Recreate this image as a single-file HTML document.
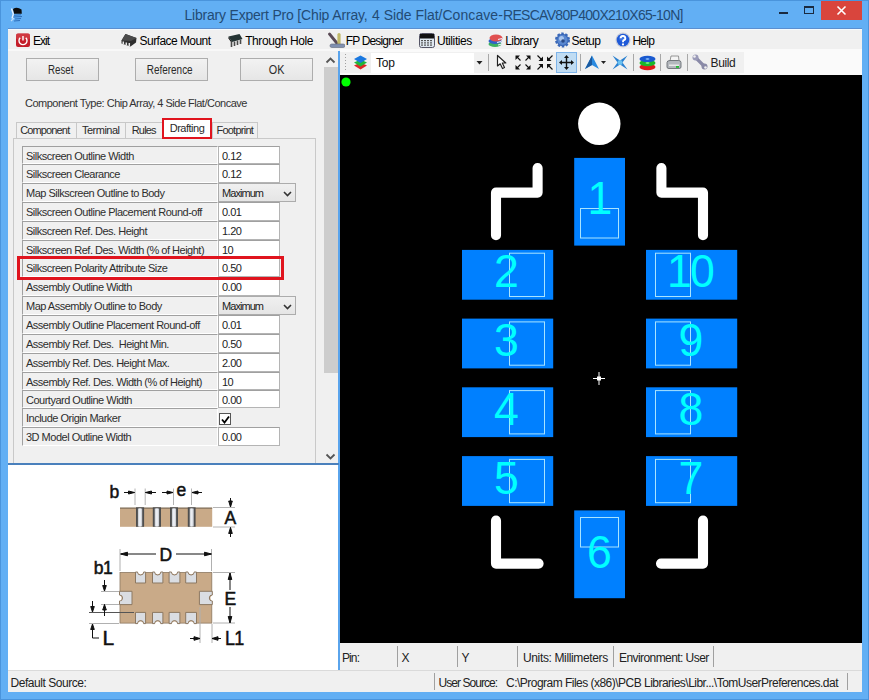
<!DOCTYPE html>
<html><head><meta charset="utf-8">
<style>
*{margin:0;padding:0;box-sizing:border-box}
html,body{width:869px;height:700px;overflow:hidden;background:#62aff4;font-family:"Liberation Sans",sans-serif;color:#000}
.a{position:absolute}
.t{position:absolute;white-space:nowrap;line-height:1}
.ttl{top:7.7px;font-size:14px;color:#234b74}
.menu{font-size:12px;letter-spacing:-0.45px;color:#000;top:35px}
.btn{position:absolute;top:58px;height:23px;width:73px;border:1px solid #adadad;background:linear-gradient(#f2f2f2,#e6e6e6);color:#2a2a2a;font-size:12px;letter-spacing:0px;text-align:center;line-height:22px}
.tab{position:absolute;top:122px;height:16px;border:1px solid #c8c8c8;border-bottom:none;background:#f0f0f0;color:#2a2a2a;font-size:11px;letter-spacing:-0.5px;text-align:center;line-height:15px}
.lbl{position:absolute;left:22px;width:196px;border-top:1px solid #a0a0a0;border-left:1px solid #a0a0a0;border-bottom:1px solid #fff;border-right:1px solid #fff;background:#f0f0f0;font-size:11px;letter-spacing:-0.5px;padding-left:3px;line-height:12px;color:#2e2e2e}
.val{position:absolute;left:218px;width:62px;border:1px solid #b4b4b4;border-top-color:#a0a0a0;background:#fff;font-size:11px;letter-spacing:-0.5px;padding-left:3px;line-height:12px;color:#222}
.dd{position:absolute;left:218px;width:78px;border:1px solid #acacac;background:linear-gradient(#f0f0f0,#e5e5e5);font-size:11px;letter-spacing:-0.95px;padding-left:3px;line-height:12px;color:#222}
.sb{position:absolute;top:646px;width:1px;height:21px;background:#a0a0a0}
.st{font-size:12px;letter-spacing:-0.4px;color:#222}
</style></head><body>
<!-- window frame -->
<div class="a" style="left:0;top:0;width:869px;height:1px;background:#4a94dc"></div>
<div class="a" style="left:0;top:0;width:1px;height:700px;background:#4a94dc"></div>
<div class="a" style="left:868px;top:0;width:1px;height:700px;background:#4a94dc"></div>
<div class="a" style="left:0;top:699px;width:869px;height:1px;background:#4a94dc"></div>
<!-- title icon -->
<svg class="a" style="left:9px;top:5px" width="16" height="18" viewBox="0 0 16 18">
<path d="M4,4 Q8,1.5 12.5,4.5 L12.8,8.8 L5,8.8 Z" fill="#0c0c0c"/>
<path d="M2.5,3.5 L4.3,9 L3,13.5" stroke="#e6f2ff" stroke-width="1.4" fill="none"/>
<path d="M2,16 L5,13" stroke="#cfe6ff" stroke-width="1.3" fill="none" opacity="0.8"/>
<path d="M5,10.3 L12,9.8 M4.5,12 L13,11.5 M6,14 L12,13.5 M5,16 L11,15.5" stroke="#1e5aa8" stroke-width="1.1" fill="none" opacity="0.75"/></svg>
<div class="t ttl" style="left:184.5px;letter-spacing:-0.206px">Library Expert Pro</div>
<div class="t ttl" style="left:297.3px;letter-spacing:-0.151px">[Chip Array,</div>
<div class="t ttl" style="left:372.1px;letter-spacing:-0.043px">4 Side Flat/</div>
<div class="t ttl" style="left:442.4px;letter-spacing:0.085px">Concave-</div>
<div class="t ttl" style="left:503.0px;letter-spacing:-0.702px">RESCAV80P400X210X65-10N]</div>
<!-- caption buttons -->
<div class="a" style="left:779px;top:12px;width:9px;height:2px;background:#1a2a40"></div>
<div class="a" style="left:804px;top:6px;width:10px;height:8px;border:1px solid #1a2a40;border-top-width:2px"></div>
<div class="a" style="left:821px;top:1px;width:41px;height:19px;background:#d9453d"></div>
<svg class="a" style="left:836px;top:5px" width="11" height="11" viewBox="0 0 11 11"><path d="M1.5,1.5 L9.5,9.5 M9.5,1.5 L1.5,9.5" stroke="#fff" stroke-width="1.6"/></svg>

<!-- client area -->
<div class="a" style="left:8px;top:29px;width:854px;height:663px;background:#f0f0f0"></div>
<!-- menu bar -->
<div class="a" style="left:8px;top:28px;width:854px;height:1px;background:#5b8fd0"></div>
<div class="a" style="left:8px;top:29px;width:854px;height:1px;background:#f4fbff"></div>

<!-- menu items -->
<div class="t menu" style="left:33px;letter-spacing:-1px">Exit</div>
<div class="t menu" style="left:139.6px;letter-spacing:-0.55px">Surface Mount</div>
<div class="t menu" style="left:245.2px;letter-spacing:-0.41px">Through Hole</div>
<div class="t menu" style="left:345.8px;letter-spacing:-0.85px">FP Designer</div>
<div class="t menu" style="left:436.9px;letter-spacing:-0.4px">Utilities</div>
<div class="t menu" style="left:505.2px;letter-spacing:-0.53px">Library</div>
<div class="t menu" style="left:571.6px;letter-spacing:-0.5px">Setup</div>
<div class="t menu" style="left:632.4px;letter-spacing:-0.74px">Help</div>
<svg class="a" style="left:15px;top:33px" width="16" height="15" viewBox="0 0 16 15">
<rect x="1" y="0.5" width="14" height="13.5" rx="2" fill="#c41e2a"/><rect x="1" y="0.5" width="14" height="6" rx="2" fill="#d84a50" opacity="0.6"/>
<path d="M5.2,4.8 A4,4 0 1 0 10.8,4.8" stroke="#fff" stroke-width="1.4" fill="none"/><path d="M8,3 V7.5" stroke="#fff" stroke-width="1.4"/></svg>
<svg class="a" style="left:121px;top:33px" width="17" height="15" viewBox="0 0 17 15">
<polygon points="0.5,7.5 4.5,1 15.5,5 15,9.5 9.5,13.5 0.5,10.5" fill="#2e2e2e"/><polygon points="4.5,1 15.5,5 10,8 0.5,7.5" fill="#4a4a4a"/>
<path d="M2.3,8.5 V11 M5.3,9.5 V12 M8.3,10 V13" stroke="#e8e8e8" stroke-width="1.5"/></svg>
<svg class="a" style="left:227px;top:33px" width="17" height="15" viewBox="0 0 17 15">
<polygon points="1.5,3.5 12.5,1 15.5,6 5,9" fill="#243434"/><polygon points="1.5,3.5 5,9 5,10.5 1.5,5.5" fill="#111"/>
<path d="M4.5,9 V14 M7.5,8.5 V13 M10.5,7.5 V12 M13.5,6.5 V11" stroke="#4a4a4a" stroke-width="1.6"/></svg>
<svg class="a" style="left:328px;top:32px" width="17" height="16" viewBox="0 0 17 16">
<path d="M1.5,2 L10,12.5" stroke="#5a4a55" stroke-width="2.8" stroke-linecap="round"/><path d="M11,2.5 V12" stroke="#c0b868" stroke-width="3.2" stroke-linecap="round"/>
<rect x="2" y="12" width="15" height="3.5" rx="1.7" fill="#8090b0" stroke="#606878" stroke-width="0.6"/></svg>
<svg class="a" style="left:419px;top:33px" width="16" height="15" viewBox="0 0 16 15">
<rect x="0.5" y="0.5" width="15" height="14" rx="2" fill="#dfe8f0" stroke="#556" stroke-width="1"/><rect x="1" y="1" width="14" height="4.5" fill="#111"/>
<g fill="#555"><rect x="2" y="7" width="2" height="1.2"/><rect x="5" y="7" width="2" height="1.2"/><rect x="8" y="7" width="2" height="1.2"/><rect x="11" y="7" width="2" height="1.2"/>
<rect x="2" y="9.3" width="2" height="1.2"/><rect x="5" y="9.3" width="2" height="1.2"/><rect x="8" y="9.3" width="2" height="1.2"/><rect x="11" y="9.3" width="2" height="1.2"/>
<rect x="2" y="11.5" width="2" height="1.2"/><rect x="5" y="11.5" width="2" height="1.2"/><rect x="8" y="11.5" width="2" height="1.2"/><rect x="11" y="11.5" width="2" height="1.2"/></g></svg>
<svg class="a" style="left:488px;top:33px" width="16" height="15" viewBox="0 0 16 15">
<ellipse cx="7" cy="11" rx="6.5" ry="3" fill="#3cb060"/><ellipse cx="7" cy="8" rx="6.5" ry="3" fill="#3060c8"/><ellipse cx="8" cy="5" rx="6.5" ry="3.5" fill="#e05050"/>
<path d="M10,6.5 L14,5.5 M9,9.5 L13,8.5 M10,12 L14,11" stroke="#eef" stroke-width="1.2"/></svg>
<svg class="a" style="left:554px;top:32px" width="17" height="16" viewBox="0 0 17 16">
<circle cx="8.5" cy="8" r="6.2" fill="#3a68b8" stroke="#3a68b8" stroke-width="2.6" stroke-dasharray="2.4 1.5"/><circle cx="8.5" cy="8" r="5" fill="#5a88d0"/><circle cx="7.5" cy="6.5" r="2.5" fill="#a8c4ec"/><circle cx="9" cy="9" r="1.8" fill="#2a4a88"/></svg>
<svg class="a" style="left:615px;top:32px" width="16" height="16" viewBox="0 0 16 16">
<circle cx="8" cy="8" r="7.5" fill="#c8ccd8"/><circle cx="8" cy="8" r="6.3" fill="#1f5ad8"/><circle cx="7" cy="6" r="3" fill="#4a80e8" opacity="0.6"/>
<path d="M5.7,6.2 A2.3,2.2 0 1 1 8.5,8.3 Q8,8.7 8,10.2" stroke="#fff" stroke-width="1.9" fill="none"/><circle cx="8" cy="12.4" r="1.1" fill="#fff"/></svg>
<!-- left panel -->
<div class="a" style="left:8px;top:49px;width:331px;height:2px;background:#f8f8f8"></div>

<!-- buttons -->
<div class="btn" style="left:26px"><span style="display:inline-block;transform:scaleX(0.81);position:relative;left:-1.5px">Reset</span></div>
<div class="btn" style="left:135px"><span style="display:inline-block;transform:scaleX(0.83);position:relative;left:-1.5px">Reference</span></div>
<div class="btn" style="left:240px"><span style="display:inline-block;transform:scaleX(0.9)">OK</span></div>
<div class="t" style="left:25px;top:98px;font-size:11px;letter-spacing:-0.5px;color:#333">Component Type: Chip Array, 4 Side Flat/Concave</div>
<div class="a" style="left:13px;top:138px;width:303px;height:326px;border:1px solid #c9c9c9;border-bottom:none;background:#f0f0f0"></div>
<div class="tab" style="left:15.5px;width:61.5px"><span style="letter-spacing:-0.85px;position:relative;left:-1.5px">Component</span></div>
<div class="tab" style="left:76px;width:49.5px">Terminal</div>
<div class="tab" style="left:124.5px;width:38.5px"><span style="letter-spacing:-0.8px">Rules</span></div>
<div class="tab" style="left:212px;width:45.5px"><span style="letter-spacing:-0.75px">Footprint</span></div>
<div class="tab" style="left:162px;top:118px;width:50px;height:21px;background:#fff;border:2px solid #e0141e;line-height:17px">Drafting</div>
<div class="lbl" style="top:146px;height:18px;padding-top:2.7px">Silkscreen Outline Width</div>
<div class="val" style="top:146px;height:18px;padding-top:2.7px">0.12</div>
<div class="lbl" style="top:164px;height:19px;padding-top:2.7px">Silkscreen Clearance</div>
<div class="val" style="top:164px;height:19px;padding-top:2.7px">0.12</div>
<div class="lbl" style="top:183px;height:19px;padding-top:3.2px">Map Silkscreen Outline to Body</div>
<div class="dd" style="top:183px;height:19px;padding-top:3.2px">Maximum<svg class="a" style="right:3px;top:7px" width="9" height="6" viewBox="0 0 9 6"><path d="M1,1 L4.5,4.5 L8,1" stroke="#333" stroke-width="1.6" fill="none"/></svg></div>
<div class="lbl" style="top:202px;height:19px;padding-top:2.7px">Silkscreen Outline Placement Round-off</div>
<div class="val" style="top:202px;height:19px;padding-top:2.7px">0.01</div>
<div class="lbl" style="top:221px;height:19px;padding-top:2.7px">Silkscreen Ref. Des. Height</div>
<div class="val" style="top:221px;height:19px;padding-top:2.7px">1.20</div>
<div class="lbl" style="top:240px;height:18px;padding-top:2.7px">Silkscreen Ref. Des. Width (% of Height)</div>
<div class="val" style="top:240px;height:18px;padding-top:2.7px">10</div>
<div class="lbl" style="top:258px;height:19px;padding-top:2.7px">Silkscreen Polarity Attribute Size</div>
<div class="val" style="top:258px;height:19px;padding-top:2.7px">0.50</div>
<div class="lbl" style="top:277px;height:19px;padding-top:2.7px">Assembly Outline Width</div>
<div class="val" style="top:277px;height:19px;padding-top:2.7px">0.00</div>
<div class="lbl" style="top:296px;height:19px;padding-top:3.2px">Map Assembly Outline to Body</div>
<div class="dd" style="top:296px;height:19px;padding-top:3.2px">Maximum<svg class="a" style="right:3px;top:7px" width="9" height="6" viewBox="0 0 9 6"><path d="M1,1 L4.5,4.5 L8,1" stroke="#333" stroke-width="1.6" fill="none"/></svg></div>
<div class="lbl" style="top:315px;height:19px;padding-top:2.7px">Assembly Outline Placement Round-off</div>
<div class="val" style="top:315px;height:19px;padding-top:2.7px">0.01</div>
<div class="lbl" style="top:334px;height:19px;padding-top:2.7px">Assembly Ref. Des.&nbsp; Height Min.</div>
<div class="val" style="top:334px;height:19px;padding-top:2.7px">0.50</div>
<div class="lbl" style="top:353px;height:19px;padding-top:2.7px">Assembly Ref. Des. Height Max.</div>
<div class="val" style="top:353px;height:19px;padding-top:2.7px">2.00</div>
<div class="lbl" style="top:372px;height:18px;padding-top:2.7px">Assembly Ref. Des. Width (% of Height)</div>
<div class="val" style="top:372px;height:18px;padding-top:2.7px">10</div>
<div class="lbl" style="top:390px;height:18px;padding-top:2.7px">Courtyard Outline Width</div>
<div class="val" style="top:390px;height:18px;padding-top:2.7px">0.00</div>
<div class="lbl" style="top:408px;height:19px;padding-top:2.7px">Include Origin Marker</div>
<div class="a" style="left:218.5px;top:412.5px;width:12px;height:12px;border:1px solid #555;background:#fff"><svg class="a" style="left:1px;top:1px" width="9" height="9" viewBox="0 0 9 9"><path d="M1,4.5 L3.5,7.5 L8,1.5" stroke="#000" stroke-width="1.8" fill="none"/></svg></div>
<div class="lbl" style="top:427px;height:19px;padding-top:2.7px">3D Model Outline Width</div>
<div class="val" style="top:427px;height:19px;padding-top:2.7px">0.00</div>
<div class="a" style="left:17px;top:256px;width:267px;height:24px;border:3px solid #e0141e"></div>
<div class="a" style="left:323px;top:51px;width:16px;height:412px;background:#f0f0f0"></div>
<svg class="a" style="left:325px;top:56px" width="11" height="8" viewBox="0 0 11 8"><path d="M1.5,6.5 L5.5,2.5 L9.5,6.5" stroke="#555" stroke-width="1.8" fill="none"/></svg>
<div class="a" style="left:324px;top:67px;width:14px;height:306px;background:#cdcdcd"></div>
<svg class="a" style="left:325px;top:453px" width="11" height="8" viewBox="0 0 11 8"><path d="M1.5,1.5 L5.5,5.5 L9.5,1.5" stroke="#555" stroke-width="1.8" fill="none"/></svg>
<!-- right toolbar area -->
<div class="a" style="left:340px;top:49px;width:522px;height:26px;background:#fafafa"></div>
<div class="a" style="left:340px;top:52px;width:404px;height:21px;background:#f0f0f0"></div>
<!-- toolbar -->
<div class="a" style="left:345px;top:54px;width:1px;height:16px;background:repeating-linear-gradient(#a0a0a0 0 1px,transparent 1px 3px)"></div>
<svg class="a" style="left:353px;top:54px" width="15" height="17" viewBox="0 0 15 17">
<polygon points="7.5,8.5 14,11.5 7.5,15.5 1,11.5" fill="#e02828"/><polygon points="7.5,5.5 14,8.5 7.5,12.5 1,8.5" fill="#22b83a"/><polygon points="7.5,1.5 14,5 7.5,9 1,5" fill="#1a78e0"/></svg>
<div class="a" style="left:371px;top:53px;width:116px;height:20px;background:#fff"></div>
<div class="a" style="left:474px;top:53px;width:13px;height:20px;background:#f0f0f0"></div>
<svg class="a" style="left:476px;top:60px" width="7" height="5" viewBox="0 0 7 5"><polygon points="0.5,1 6.5,1 3.5,4.5" fill="#222"/></svg>
<div class="t" style="left:376px;top:57px;font-size:12px;letter-spacing:-0.2px;color:#111">Top</div>
<div class="a" style="left:488px;top:54px;width:1px;height:17px;background:#a8a8a8"></div>
<div class="a" style="left:580px;top:54px;width:1px;height:17px;background:#a8a8a8"></div>
<div class="a" style="left:633px;top:54px;width:1px;height:17px;background:#a8a8a8"></div>
<div class="a" style="left:660px;top:54px;width:1px;height:17px;background:#a8a8a8"></div>
<div class="a" style="left:687px;top:54px;width:1px;height:17px;background:#a8a8a8"></div>
<svg class="a" style="left:496px;top:54px" width="12" height="16" viewBox="0 0 12 16">
<path d="M1.5,1.5 L1.5,12 L4.2,9.8 L6.5,14.5 L8.5,13.5 L6.3,9 L9.8,9 Z" fill="#fff" stroke="#222" stroke-width="1.2" stroke-linejoin="round"/></svg>
<svg class="a" style="left:515px;top:55px" width="16" height="15" viewBox="0 0 16 15">
<g fill="#111"><polygon points="0.5,0.5 5,0.5 0.5,5"/><polygon points="15.5,0.5 11,0.5 15.5,5"/><polygon points="0.5,14.5 5,14.5 0.5,10"/><polygon points="15.5,14.5 11,14.5 15.5,10"/></g>
<g stroke="#111" stroke-width="1.1"><path d="M2,2 L5.5,5.5 M14,2 L10.5,5.5 M2,13 L5.5,9.5 M14,13 L10.5,9.5"/></g></svg>
<svg class="a" style="left:537px;top:55px" width="16" height="15" viewBox="0 0 16 15">
<g fill="#111"><polygon points="6,6 1.5,6 6,1.5"/><polygon points="10,6 14.5,6 10,1.5"/><polygon points="6,9 1.5,9 6,13.5"/><polygon points="10,9 14.5,9 10,13.5"/></g>
<g stroke="#111" stroke-width="1.1"><path d="M0.5,0.5 L4.5,4.5 M15.5,0.5 L11.5,4.5 M0.5,14.5 L4.5,10.5 M15.5,14.5 L11.5,10.5"/></g></svg>
<div class="a" style="left:556px;top:52px;width:21px;height:21px;background:#c0dcf3;border:1px solid #7eb4ea"></div>
<svg class="a" style="left:559px;top:55px" width="15" height="15" viewBox="0 0 15 15">
<path d="M7.5,2 V13 M2,7.5 H13" stroke="#111" stroke-width="1.4"/>
<g fill="#111"><polygon points="7.5,0 10,3 5,3"/><polygon points="7.5,15 10,12 5,12"/><polygon points="0,7.5 3,5 3,10"/><polygon points="15,7.5 12,5 12,10"/></g></svg>
<svg class="a" style="left:584px;top:55px" width="24" height="15" viewBox="0 0 24 15">
<polygon points="8,0.5 15,14 8,10 1,14" fill="#2a8ae0"/><polygon points="8,0.5 8,10 1,14" fill="#1a5aa0"/>
<polygon points="17,6 22,6 19.5,9" fill="#222"/></svg>
<svg class="a" style="left:612px;top:55px" width="16" height="15" viewBox="0 0 16 15">
<polygon points="0.5,0.5 8,5.5 15.5,0.5 10.5,7.5 15.5,14.5 8,9.5 0.5,14.5 5.5,7.5" fill="#2a80d0"/><circle cx="8" cy="7.5" r="2.5" fill="#6ac0f0"/></svg>
<svg class="a" style="left:639px;top:55px" width="17" height="16" viewBox="0 0 17 16">
<ellipse cx="8.5" cy="12" rx="8" ry="3.2" fill="#e01a1a"/><ellipse cx="8.5" cy="8" rx="8" ry="3.2" fill="#1ab82a"/><ellipse cx="8.5" cy="4" rx="8" ry="3.2" fill="#1a5ad0"/>
<ellipse cx="8.5" cy="4" rx="2" ry="0.8" fill="#9cf"/><ellipse cx="8.5" cy="8" rx="2" ry="0.8" fill="#9f9"/></svg>
<svg class="a" style="left:666px;top:55px" width="16" height="15" viewBox="0 0 16 15">
<path d="M4,6 L5,1 H12.5 L13,6 Z" fill="#f4f4f4" stroke="#8a8a8a" stroke-width="0.9"/><path d="M1,7.5 Q1,5.5 4,5.5 H12.5 Q15,5.5 15,7.5 V12 Q15,13.5 13,13.5 H3 Q1,13.5 1,12 Z" fill="#b4b8be" stroke="#6a6e74" stroke-width="0.9"/>
<rect x="3" y="9.5" width="10" height="1.5" fill="#e8e8e8"/><rect x="10" y="11" width="3" height="1.8" fill="#22bb33"/></svg>
<svg class="a" style="left:692px;top:54px" width="16" height="16" viewBox="0 0 16 16">
<path d="M3,3 L13,13" stroke="#8a8aa8" stroke-width="3.2" stroke-linecap="round"/><circle cx="3.5" cy="3.5" r="3" fill="#9a9ab8"/><circle cx="12.5" cy="12.5" r="3" fill="#8a8aa8"/>
<circle cx="2.5" cy="2.5" r="1.3" fill="#f0f0f0"/><circle cx="13.5" cy="13.5" r="1.3" fill="#f0f0f0"/></svg>
<div class="t" style="left:710.5px;top:57px;font-size:12px;letter-spacing:-0.35px;color:#222">Build</div>
<!-- canvas -->
<div class="a" style="left:340px;top:75px;width:522px;height:568px;background:#000"></div>
<!-- canvas svg -->
<svg class="a" style="left:340px;top:75px" width="522" height="568" viewBox="340 75 522 568">
<circle cx="346" cy="82" r="4.6" fill="#00ff00"/>
<circle cx="599.3" cy="123.8" r="21.2" fill="#fff"/>
<g stroke="#fff" stroke-width="10.1" fill="none" stroke-linecap="round" stroke-linejoin="round">
<path d="M537.6,168 V192.6 H496 V235.2"/>
<path d="M661.4,168 V192.6 H703 V235.2"/>
<path d="M496,520.5 V563.6 H538.6"/>
<path d="M703,520.5 V563.6 H661"/>
</g>
<g fill="#0080ff">
<rect x="574.2" y="157.9" width="50.8" height="87.7"/>
<rect x="574.2" y="510.4" width="50.8" height="87.8"/>
<rect x="462" y="249.9" width="91.2" height="49.8"/>
<rect x="646" y="249.9" width="91.2" height="49.8"/>
<rect x="462" y="318.6" width="91.2" height="49.8"/>
<rect x="646" y="318.6" width="91.2" height="49.8"/>
<rect x="462" y="387.3" width="91.2" height="49.8"/>
<rect x="646" y="387.3" width="91.2" height="49.8"/>
<rect x="462" y="456.1" width="91.2" height="49.8"/>
<rect x="646" y="456.1" width="91.2" height="49.8"/>
</g>
<g fill="none" stroke="#a8e4ff" stroke-width="1">
<rect x="580.5" y="208.5" width="38" height="29.5"/>
<rect x="580.5" y="517.5" width="38" height="29.5"/>
<rect x="509.5" y="253.2" width="35" height="43.3"/>
<rect x="655.5" y="253.2" width="35" height="43.3"/>
<rect x="509.5" y="321.9" width="35" height="43.3"/>
<rect x="655.5" y="321.9" width="35" height="43.3"/>
<rect x="509.5" y="390.6" width="35" height="43.3"/>
<rect x="655.5" y="390.6" width="35" height="43.3"/>
<rect x="509.5" y="459.4" width="35" height="43.3"/>
<rect x="655.5" y="459.4" width="35" height="43.3"/>
</g>
<g fill="#00ffff" font-family="Liberation Sans" font-size="47" text-anchor="middle">
<text transform="translate(599.8,214.2) scale(0.95,1)">1</text>
<text transform="translate(599.3,568.2) scale(0.95,1)">6</text>
<text transform="translate(506.5,287.4) scale(0.95,1)">2</text>
<text transform="translate(690,287.4) scale(0.95,1)" letter-spacing="-1.8">10</text>
<text transform="translate(506.5,356.1) scale(0.95,1)">3</text>
<text transform="translate(690.9,356.1) scale(0.95,1)">9</text>
<text transform="translate(506.5,424.8) scale(0.95,1)">4</text>
<text transform="translate(690.9,424.8) scale(0.95,1)">8</text>
<text transform="translate(506.5,493.6) scale(0.95,1)">5</text>
<text transform="translate(690.9,493.6) scale(0.95,1)">7</text>
</g>
<g fill="#fff"><rect x="593" y="378" width="12" height="1"/><rect x="598.5" y="372" width="1" height="13"/><rect x="597" y="376.5" width="4" height="4"/></g>
</svg>
<!-- blue separators -->
<div class="a" style="left:338px;top:51px;width:2px;height:619px;background:#5aa4ec"></div>
<div class="a" style="left:8px;top:463px;width:331px;height:2px;background:#4a80bc"></div>
<!-- diagram area -->
<div class="a" style="left:8px;top:465px;width:330px;height:205px;background:#fff"></div>
<!-- status -->
<div class="t st" style="left:342px;top:652px;letter-spacing:-0.9px">Pin:</div>
<div class="sb" style="left:397px"></div>
<div class="sb" style="left:457px"></div>
<div class="sb" style="left:517px"></div>
<div class="sb" style="left:613px"></div>
<div class="sb" style="left:713px"></div>
<div class="t st" style="left:401.5px;top:652px">X</div>
<div class="t st" style="left:461.5px;top:652px">Y</div>
<div class="t st" style="left:523px;top:652px;letter-spacing:-0.36px">Units: Millimeters</div>
<div class="t st" style="left:619px;top:652px;letter-spacing:-0.57px">Environment: User</div>
<div class="a" style="left:434px;top:673px;width:1px;height:17px;background:#a0a0a0"></div>
<div class="a" style="left:847px;top:673px;width:1px;height:17px;background:#a0a0a0"></div>
<div class="t st" style="left:10.5px;top:677px;letter-spacing:-0.45px">Default Source:</div>
<div class="t st" style="left:438.5px;top:677px;letter-spacing:-0.94px">User Source:</div>
<div class="t st" style="left:506px;top:677px;letter-spacing:-0.52px">C:\Program Files (x86)\PCB Libraries\Libr...\TomUserPreferences.dat</div>
<!-- diagram -->
<svg class="a" style="left:8px;top:464px" width="331" height="206" viewBox="8 464 331 206">
<rect x="120" y="507.8" width="92.2" height="19" fill="#c9aa88"/>
<rect x="120" y="507.5" width="92.2" height="1.2" fill="#6a5a4a" opacity="0.8"/>
<rect x="136" y="507.3" width="8.1" height="19.5" fill="#4e4e4e"/>
<rect x="137.9" y="508.5" width="4.3" height="18" fill="#cfd3da"/>
<rect x="138.9" y="508.5" width="2.1" height="18" fill="#eceef2"/>
<rect x="152.8" y="507.3" width="8.2" height="19.5" fill="#4e4e4e"/>
<rect x="154.7" y="508.5" width="4.4" height="18" fill="#cfd3da"/>
<rect x="155.7" y="508.5" width="2.2" height="18" fill="#eceef2"/>
<rect x="170" y="507.3" width="8.0" height="19.5" fill="#4e4e4e"/>
<rect x="171.9" y="508.5" width="4.2" height="18" fill="#cfd3da"/>
<rect x="172.9" y="508.5" width="2.0" height="18" fill="#eceef2"/>
<rect x="187.8" y="507.3" width="7.8" height="19.5" fill="#4e4e4e"/>
<rect x="189.7" y="508.5" width="4.0" height="18" fill="#cfd3da"/>
<rect x="190.7" y="508.5" width="1.8" height="18" fill="#eceef2"/>
<g stroke="#b4b4b4" stroke-width="1">
<path d="M135,488.5 V505"/>
<path d="M145.2,488.5 V505"/>
<path d="M173.5,488.5 V505"/>
<path d="M191.5,488.5 V505"/>
<path d="M213,507.5 H235 M213,527 H235"/>
</g>
<g stroke="#111" stroke-width="1" fill="#111">
<path d="M124,492.5 H134.5"/><polygon points="134.5,492.5 128.5,491 128.5,494"/>
<path d="M145.5,492.5 H156"/><polygon points="145.5,492.5 151.5,491 151.5,494"/>
<path d="M162,492.5 H173"/><polygon points="173,492.5 167,491 167,494"/>
<path d="M192,492.5 H202"/><polygon points="192,492.5 198,491 198,494"/>
<path d="M230.5,498 V507"/><polygon points="230.5,507 228.7,501 232.3,501"/>
<path d="M230.5,527.5 V537"/><polygon points="230.5,527.5 228.7,533.5 232.3,533.5"/>
</g>
<g fill="#111" stroke="#111" stroke-width="0.5" font-family="Liberation Sans" font-size="17.5">
<text x="109.5" y="498.3">b</text>
<text x="176.5" y="496.2">e</text>
<text x="224.5" y="523.8">A</text>
<text x="159.5" y="561">D</text>
<text x="224.5" y="604.8">E</text>
<text x="93.8" y="573.6" letter-spacing="-0.5">b1</text>
</g>
<g fill="#111" stroke="#111" stroke-width="0.5" font-family="Liberation Sans" font-size="21">
<text x="102.5" y="644.6">L</text>
<text transform="translate(225,644.6) scale(0.86,1)" letter-spacing="-1">L1</text>
</g>
<rect x="120" y="572.5" width="91.8" height="50.6" fill="#c9aa88" stroke="#8c7862" stroke-width="0.8"/>
<path d="M135.5,572 V583 H145.6 V572 H143.6 A3,3 0 0 1 137.6,572 Z" fill="#dadde2" stroke="#8c7862" stroke-width="1"/>
<path d="M138.0,571.6 A2.6,2.6 0 0 0 143.2,571.6 Z" fill="#fff"/>
<path d="M135.5,623.6 V612.4 H145.6 V623.6 H143.6 A3,3 0 0 0 137.6,623.6 Z" fill="#dadde2" stroke="#8c7862" stroke-width="1"/>
<path d="M138.0,624 A2.6,2.6 0 0 1 143.2,624 Z" fill="#fff"/>
<path d="M152.5,572 V583 H162.9 V572 H160.7 A3,3 0 0 1 154.7,572 Z" fill="#dadde2" stroke="#8c7862" stroke-width="1"/>
<path d="M155.1,571.6 A2.6,2.6 0 0 0 160.3,571.6 Z" fill="#fff"/>
<path d="M152.5,623.6 V612.4 H162.9 V623.6 H160.7 A3,3 0 0 0 154.7,623.6 Z" fill="#dadde2" stroke="#8c7862" stroke-width="1"/>
<path d="M155.1,624 A2.6,2.6 0 0 1 160.3,624 Z" fill="#fff"/>
<path d="M169.1,572 V583 H179.9 V572 H177.5 A3,3 0 0 1 171.5,572 Z" fill="#dadde2" stroke="#8c7862" stroke-width="1"/>
<path d="M171.9,571.6 A2.6,2.6 0 0 0 177.1,571.6 Z" fill="#fff"/>
<path d="M169.1,623.6 V612.4 H179.9 V623.6 H177.5 A3,3 0 0 0 171.5,623.6 Z" fill="#dadde2" stroke="#8c7862" stroke-width="1"/>
<path d="M171.9,624 A2.6,2.6 0 0 1 177.1,624 Z" fill="#fff"/>
<path d="M185.7,572 V583 H196.5 V572 H194.1 A3,3 0 0 1 188.1,572 Z" fill="#dadde2" stroke="#8c7862" stroke-width="1"/>
<path d="M188.5,571.6 A2.6,2.6 0 0 0 193.7,571.6 Z" fill="#fff"/>
<path d="M185.7,623.6 V612.4 H196.5 V623.6 H194.1 A3,3 0 0 0 188.1,623.6 Z" fill="#dadde2" stroke="#8c7862" stroke-width="1"/>
<path d="M188.5,624 A2.6,2.6 0 0 1 193.7,624 Z" fill="#fff"/>
<path d="M119.5,591.3 H132 V604.6 H119.5 V601 A3,3 0 0 0 119.5,595 Z" fill="#dadde2" stroke="#8c7862" stroke-width="1"/>
<path d="M119,595.4 A2.6,2.6 0 0 1 119,600.6 Z" fill="#fff"/>
<path d="M212.3,591.3 H199.4 V604.6 H212.3 V601 A3,3 0 0 1 212.3,595 Z" fill="#dadde2" stroke="#8c7862" stroke-width="1"/>
<g stroke="#b0b0b0" stroke-width="1" fill="none">
<path d="M120,549 V571 M211.5,549 V571"/>
<path d="M213,572.5 H235 M213,623 H235"/>
<path d="M101,591.5 H119 M101,604.5 H119"/>
<path d="M200,607 V643 M212,624 V643"/>
<path d="M89,623.5 H119"/>
</g>
<path d="M89,612.5 H134" stroke="#555" stroke-width="1"/>
<g stroke="#111" stroke-width="1" fill="#111">
<path d="M121,554 H156 M176,554 H211"/><polygon points="120.5,554 127.5,552.2 127.5,555.8"/><polygon points="211.5,554 204.5,552.2 204.5,555.8"/>
<path d="M230,573 V590 M230,607 V622.5"/><polygon points="230,573 228.2,579.5 231.8,579.5"/><polygon points="230,623 228.2,616.5 231.8,616.5"/>
<path d="M104.5,580 V591"/><polygon points="104.5,591 102.7,585.5 106.3,585.5"/>
<path d="M104.5,604.5 V616"/><polygon points="104.5,604.5 102.7,610 106.3,610"/>
<path d="M92.5,601 V612"/><polygon points="92.5,612 90.7,606.5 94.3,606.5"/>
<path d="M92.5,624 V638 H99" fill="none"/><polygon points="92.5,624 90.7,629.5 94.3,629.5"/>
<path d="M190,638.5 H200"/><polygon points="200,638.5 194,636.7 194,640.3"/>
<path d="M212,638.5 H221"/><polygon points="212,638.5 218,636.7 218,640.3"/>
</g>
<path d="M213,595.4 A2.6,2.6 0 0 0 213,600.6 Z" fill="#fff"/>
</svg>
<!-- bottom status line -->
<div class="a" style="left:8px;top:670px;width:854px;height:1px;background:#dadada"></div>
</body></html>
